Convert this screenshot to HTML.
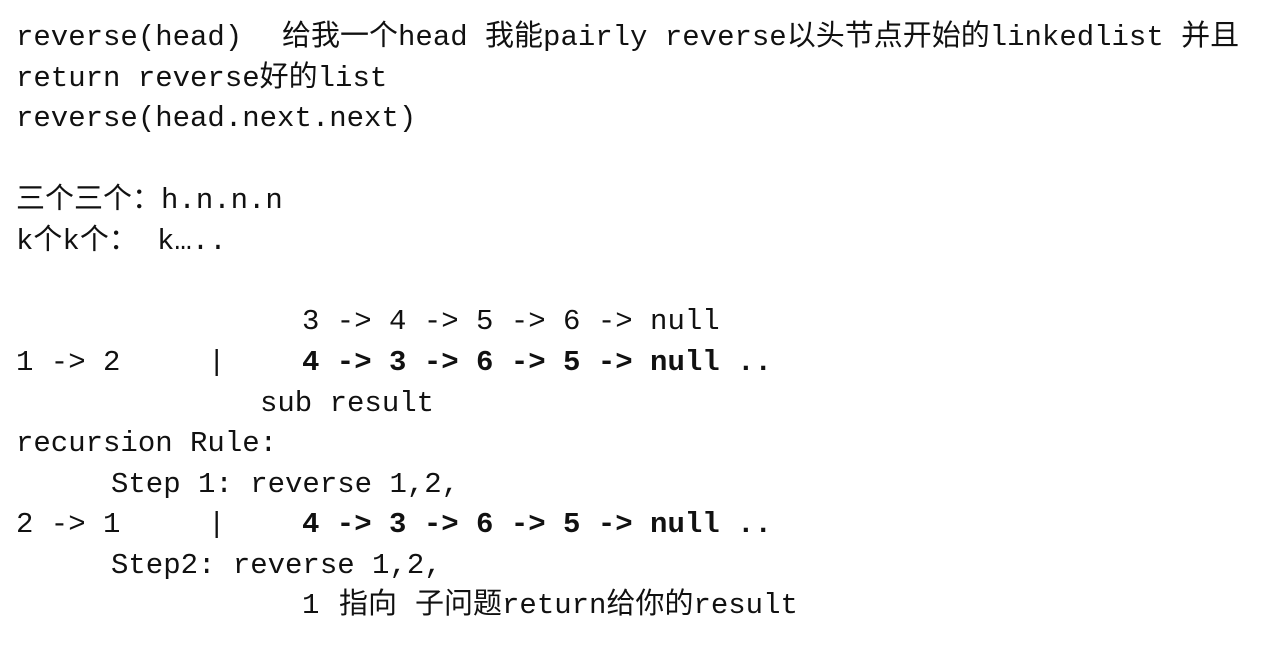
<!DOCTYPE html>
<html><head><meta charset="utf-8">
<style>
html,body{margin:0;padding:0;background:#fff;width:1274px;height:658px;overflow:hidden;position:relative}
.l{position:absolute;white-space:pre;font-family:"Liberation Mono","Noto Sans CJK SC",monospace;font-size:29px;line-height:40px;height:40px;color:#111}
.c{font-family:"Noto Sans CJK SC",sans-serif;font-size:29px;line-height:0}
b{font-weight:bold}
</style></head><body>
<div class="l" style="left:16px;top:18px">reverse(head)</div>
<div class="l" style="left:282px;top:18px"><span class="c">给我一个</span>head <span class="c">我能</span>pairly reverse<span class="c">以头节点开始的</span>linkedlist <span class="c">并且</span></div>
<div class="l" style="left:16px;top:59px">return reverse<span class="c">好的</span>list</div>
<div class="l" style="left:16px;top:99px">reverse(head.next.next)</div>
<div class="l" style="left:16px;top:181px"><span class="c">三个三个：</span>h.n.n.n</div>
<div class="l" style="left:16px;top:222px">k<span class="c">个</span>k<span class="c">个：</span></div>
<div class="l" style="left:157px;top:222px">k…..</div>
<div class="l" style="left:302px;top:302px">3 -&gt; 4 -&gt; 5 -&gt; 6 -&gt; null</div>
<div class="l" style="left:16px;top:343px">1 -&gt; 2</div>
<div class="l" style="left:208px;top:343px">|</div>
<div class="l" style="left:302px;top:343px"><b>4 -&gt; 3 -&gt; 6 -&gt; 5 -&gt; null ..</b></div>
<div class="l" style="left:260px;top:384px">sub result</div>
<div class="l" style="left:16px;top:424px">recursion Rule:</div>
<div class="l" style="left:111px;top:465px">Step 1: reverse 1,2,</div>
<div class="l" style="left:16px;top:505px">2 -&gt; 1</div>
<div class="l" style="left:208px;top:505px">|</div>
<div class="l" style="left:302px;top:505px"><b>4 -&gt; 3 -&gt; 6 -&gt; 5 -&gt; null ..</b></div>
<div class="l" style="left:111px;top:546px">Step2: reverse 1,2,</div>
<div class="l" style="left:302px;top:586px">1</div>
<div class="l" style="left:339px;top:586px"><span class="c">指向</span></div>
<div class="l" style="left:415px;top:586px"><span class="c">子问题</span>return<span class="c">给你的</span>result</div>
</body></html>
